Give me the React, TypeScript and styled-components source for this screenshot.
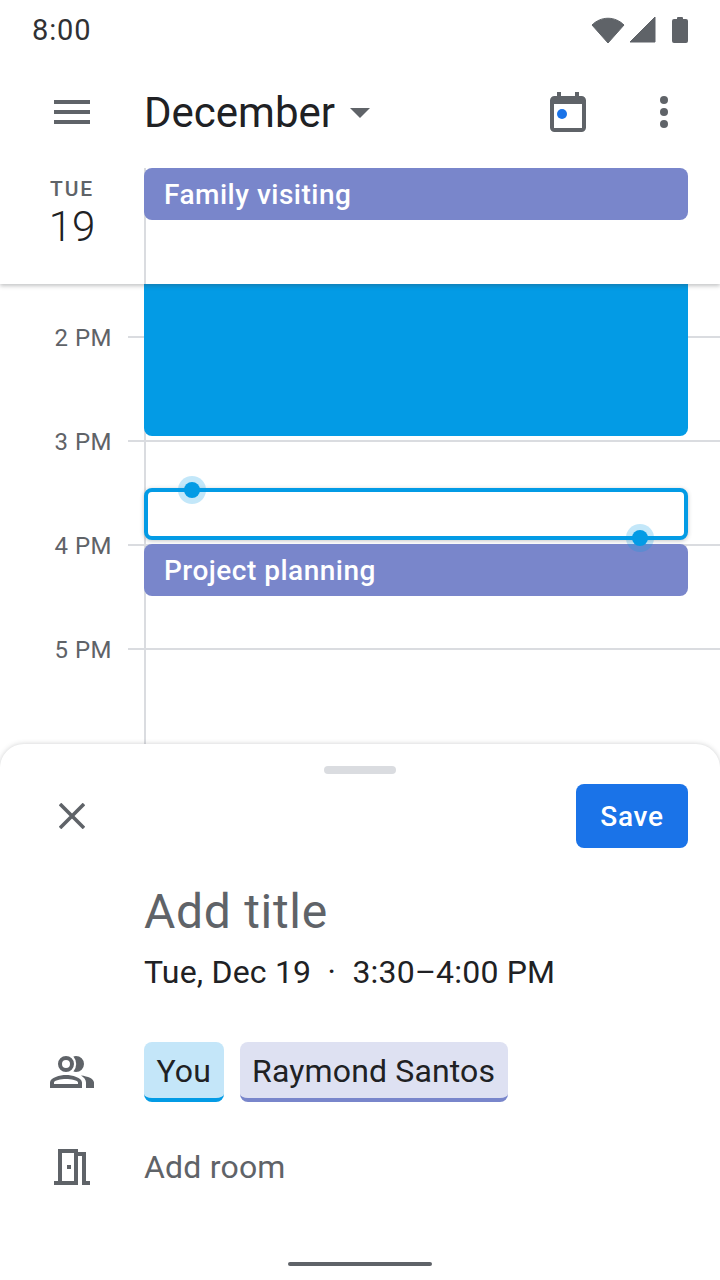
import styled, { createGlobalStyle } from "styled-components";

const hours = ["2 PM", "3 PM", "4 PM", "5 PM"];

const GlobalStyle = createGlobalStyle`
	html, body {
		margin: 0;
		padding: 0;
		background: #fff;
	}
	* {
		box-sizing: border-box;
	}
`

const Screen = styled.div`
	display: flex;
	flex-direction: column;
	width: 720px;
	height: 1280px;
	overflow: hidden;
	background: #fff;
	font-family: Roboto, "Liberation Sans", sans-serif;
	color: #202124;
`

const Header = styled.header`
	position: relative;
	z-index: 2;
	flex: 0 0 284px;
	background: #fff;
	box-shadow: 0 2px 4px rgba(60, 64, 67, 0.3);
`

const StatusBar = styled.div`
	display: flex;
	align-items: center;
	justify-content: space-between;
	height: 60px;
	padding: 0 32px;
`

const Clock = styled.span`
	font-size: 29px;
	letter-spacing: 0.9px;
	color: #303134;
`

const StatusIcons = styled.div`
	display: flex;
	align-items: center;
`

const SignalIcon = styled.svg`
	margin-left: 3px;
`

const BatteryIcon = styled.svg`
	margin-left: 13px;
`

const Toolbar = styled.div`
	display: flex;
	align-items: center;
	height: 104px;
	padding-left: 54px;
`

const Month = styled.h1`
	margin: 0 0 0 54px;
	font-size: 42px;
	font-weight: 400;
	color: #202124;
`

const Caret = styled.span`
	width: 0;
	height: 0;
	margin-left: 15px;
	margin-top: 2px;
	border-left: 10px solid transparent;
	border-right: 10px solid transparent;
	border-top: 10px solid #5f6368;
`

const ToolbarIcons = styled.div`
	display: flex;
	align-items: center;
	margin-left: auto;
	padding-right: 52px;
	gap: 74px;
`

const AllDayRow = styled.div`
	display: grid;
	grid-template-columns: 144px 1fr;
	height: 120px;
	padding-top: 4px;
`

const DateCell = styled.div`
	display: flex;
	flex-direction: column;
	align-items: center;
	padding-top: 9px;
`

const Weekday = styled.span`
	font-size: 21px;
	line-height: 24px;
	font-weight: 500;
	letter-spacing: 1.8px;
	color: #5f6368;
`

const DayNumber = styled.span`
	margin-top: 3px;
	font-size: 42px;
	line-height: 46px;
	font-weight: 300;
	color: #202124;
`

const AllDayColumn = styled.div`
	border-left: 2px solid #dadce0;
	margin-right: 32px;
`

const Chip = styled.div`
	height: 52px;
	margin-left: -2px;
	padding-left: 20px;
	border-radius: 8px;
	background: #7986cb;
	color: #fff;
	font-size: 28px;
	font-weight: 500;
	line-height: 54px;
	letter-spacing: 0.5px;
`

const Timeline = styled.main`
	position: relative;
	flex: 0 0 460px;
	padding-top: 1px;
	overflow: hidden;
`

const DayLine = styled.div`
	position: absolute;
	left: 144px;
	top: 0;
	bottom: 0;
	width: 2px;
	background: #dadce0;
`

const HourRow = styled.div`
	display: flex;
	align-items: center;
	height: 104px;
`

const HourLabel = styled.span`
	width: 112px;
	padding-top: 2px;
	text-align: right;
	font-size: 24px;
	letter-spacing: 0.5px;
	color: #5f6368;
`

const HourLine = styled.span`
	flex: 1;
	height: 2px;
	margin-left: 16px;
	background: #dadce0;
`

const EventBox = styled.div<{ $top: number; $height: number }>`
	position: absolute;
	left: 144px;
	width: 544px;
	top: ${props => props.$top}px;
	height: ${props => props.$height}px;
	border-radius: 8px;
`

const BlueEvent = styled(EventBox)`
	border-radius: 0 0 8px 8px;
	background: #039be5;
`

const DraftEvent = styled(EventBox)`
	background: #fff;
	border: 4px solid #039be5;
	box-shadow: 0 1px 4px rgba(60, 64, 67, 0.3);
`

const PlanningEvent = styled(EventBox)`
	padding-left: 20px;
	background: #7986cb;
	color: #fff;
	font-size: 28px;
	font-weight: 500;
	line-height: 54px;
	letter-spacing: 0.5px;
`

const Handle = styled.span<{ $left: number; $top: number }>`
	position: absolute;
	left: ${props => props.$left}px;
	top: ${props => props.$top}px;
	z-index: 1;
	width: 16px;
	height: 16px;
	border-radius: 50%;
	background: #039be5;
	box-shadow: 0 0 0 6px rgba(3, 155, 229, 0.24);
`

const Sheet = styled.section`
	position: relative;
	z-index: 3;
	flex: 1;
	display: flex;
	flex-direction: column;
	background: #fff;
	border-radius: 24px 24px 0 0;
	box-shadow: 0 0 5px rgba(60, 64, 67, 0.25);
`

const Grabber = styled.div`
	align-self: center;
	width: 72px;
	height: 8px;
	margin-top: 22px;
	border-radius: 4px;
	background: #dadce0;
`

const SheetTop = styled.div`
	display: flex;
	align-items: center;
	justify-content: space-between;
	height: 64px;
	margin-top: 10px;
	padding: 0 32px 0 59px;
`

const SaveButton = styled.button`
	width: 112px;
	height: 64px;
	border: none;
	border-radius: 8px;
	background: #1a73e8;
	color: #fff;
	font-family: inherit;
	font-size: 28px;
	font-weight: 500;
	letter-spacing: 0.7px;
`

const Details = styled.div`
	padding-left: 144px;
`

const Title = styled.div`
	margin-top: 32px;
	font-size: 48px;
	line-height: 64px;
	letter-spacing: 0.7px;
	color: #5f6368;
`

const When = styled.div`
	margin-top: 8px;
	font-size: 32px;
	line-height: 40px;
	letter-spacing: 0.2px;
	color: #202124;
	white-space: pre;
`

const Row = styled.div<{ $top: number; $height: number }>`
	display: grid;
	grid-template-columns: 144px 1fr;
	align-items: center;
	margin-top: ${props => props.$top}px;
	height: ${props => props.$height}px;
`

const RowIcon = styled.div`
	display: flex;
	justify-content: center;
`

const People = styled.div`
	display: flex;
	gap: 16px;
`

const Person = styled.span<{ $tint: string; $accent: string }>`
	height: 60px;
	padding: 0 12.5px;
	border-radius: 8px;
	border-bottom: 4px solid ${props => props.$accent};
	background: ${props => props.$tint};
	color: #202124;
	font-size: 32px;
	line-height: 58px;
	letter-spacing: 0.15px;
`

const AddRoom = styled.span`
	font-size: 32px;
	letter-spacing: 0.2px;
	color: #5f6368;
`

const NavPill = styled.div`
	align-self: center;
	width: 144px;
	height: 4px;
	margin-top: auto;
	margin-bottom: 14px;
	border-radius: 2px;
	background: #5f6368;
`

const App = () => {
	return (
		<Screen>
			<GlobalStyle />
			<Header>
				<StatusBar>
					<Clock>8:00</Clock>
					<StatusIcons>
						<svg width="36" height="28" viewBox="0 0 36 28"><path d="M2 9 C 11 0, 25 0, 34 9 L18 27 Z" fill="#5f6368" stroke="#5f6368" strokeWidth="1" strokeLinejoin="round" /></svg>
						<SignalIcon width="30" height="28" viewBox="0 0 30 28"><path d="M1 26 L26 1 V26 Z" fill="#5f6368" stroke="#5f6368" strokeWidth="1" strokeLinejoin="round" /></SignalIcon>
						<BatteryIcon width="16" height="28" viewBox="0 0 16 28"><path d="M5 2 Q5 1 6 1 H10 Q11 1 11 2 V3 H14 Q16 3 16 5 V25 Q16 27 14 27 H2 Q0 27 0 25 V5 Q0 3 2 3 H5 Z" fill="#5f6368" /></BatteryIcon>
					</StatusIcons>
				</StatusBar>
				<Toolbar>
					<svg width="36" height="24" viewBox="0 0 36 24"><path d="M0 0h36v4H0zM0 10h36v4H0zM0 20h36v4H0z" fill="#5f6368" /></svg>
					<Month>December</Month>
					<Caret />
					<ToolbarIcons>
						<svg width="36" height="40" viewBox="0 0 36 40"><path d="M7 0h4v4h14V0h4v4h2.500A4.500 4.500 0 0 1 36 8.500v27a4.500 4.500 0 0 1-4.500 4.500h-27A4.500 4.500 0 0 1 0 35.500v-27A4.500 4.500 0 0 1 4.500 4H7zM4 12v24h28V12z" fill="#5f6368" fillRule="evenodd" /><circle cx="12" cy="22" r="5" fill="#1a73e8" /></svg>
						<svg width="8" height="32" viewBox="0 0 8 32"><circle cx="4" cy="4" r="4" fill="#5f6368" /><circle cx="4" cy="16" r="4" fill="#5f6368" /><circle cx="4" cy="28" r="4" fill="#5f6368" /></svg>
					</ToolbarIcons>
				</Toolbar>
				<AllDayRow>
					<DateCell>
						<Weekday>TUE</Weekday>
						<DayNumber>19</DayNumber>
					</DateCell>
					<AllDayColumn>
						<Chip>Family visiting</Chip>
					</AllDayColumn>
				</AllDayRow>
			</Header>
			<Timeline>
				<DayLine />
				{hours.map(hour => (
					<HourRow key={hour}>
						<HourLabel>{hour}</HourLabel>
						<HourLine />
					</HourRow>
				))}
				<BlueEvent $top={0} $height={152} />
				<DraftEvent $top={204} $height={52} />
				<PlanningEvent $top={260} $height={52}>Project planning</PlanningEvent>
				<Handle $left={184} $top={198} />
				<Handle $left={632} $top={246} />
			</Timeline>
			<Sheet>
				<Grabber />
				<SheetTop>
					<svg width="26" height="26" viewBox="0 0 26 26"><path d="M1 1 L25 25 M25 1 L1 25" stroke="#5f6368" strokeWidth="3.600" fill="none" /></svg>
					<SaveButton>Save</SaveButton>
				</SheetTop>
				<Details>
					<Title>Add title</Title>
					<When>Tue, Dec 19  ·  3:30–4:00 PM</When>
				</Details>
				<Row $top={50} $height={60}>
					<RowIcon>
						<svg width="44" height="32" viewBox="0 0 44 32" fill="#5f6368"><path d="M16 16a8 8 0 1 0 0-16 8 8 0 0 0 0 16zm0-12a4 4 0 1 1 0 8 4 4 0 0 1 0-8zM16 19C10 19 0 21.500 0 26.500V32h32v-5.500C32 21.500 22 19 16 19zM4 28v-1.500C4 24.500 11 23 16 23s12 1.500 12 3.500V28z" fillRule="evenodd" /><path d="M26 16a8 8 0 0 0 0-16c-1 0-1.800.2-2.600.5a11.500 11.500 0 0 1 0 15c.8.300 1.600.5 2.600.5zM31 19.500c2.800 1.800 5 4 5 7V32h8v-5.500c0-3.800-6.200-6.200-13-7z" /></svg>
					</RowIcon>
					<People>
						<Person $tint="#c4e6f9" $accent="#039be5">You</Person>
						<Person $tint="#dee1f2" $accent="#7986cb">Raymond Santos</Person>
					</People>
				</Row>
				<Row $top={35} $height={60}>
					<RowIcon>
						<svg width="36" height="36" viewBox="0 0 36 36" fill="#5f6368"><path d="M4 0h20v3h8v29h4v4h-8V7h-4v29H0v-4h4zM8 4v28h12V4z" fillRule="evenodd" /><rect x="13" y="16" width="4" height="4" /></svg>
					</RowIcon>
					<AddRoom>Add room</AddRoom>
				</Row>
				<NavPill />
			</Sheet>
		</Screen>
	)
}

export default App
